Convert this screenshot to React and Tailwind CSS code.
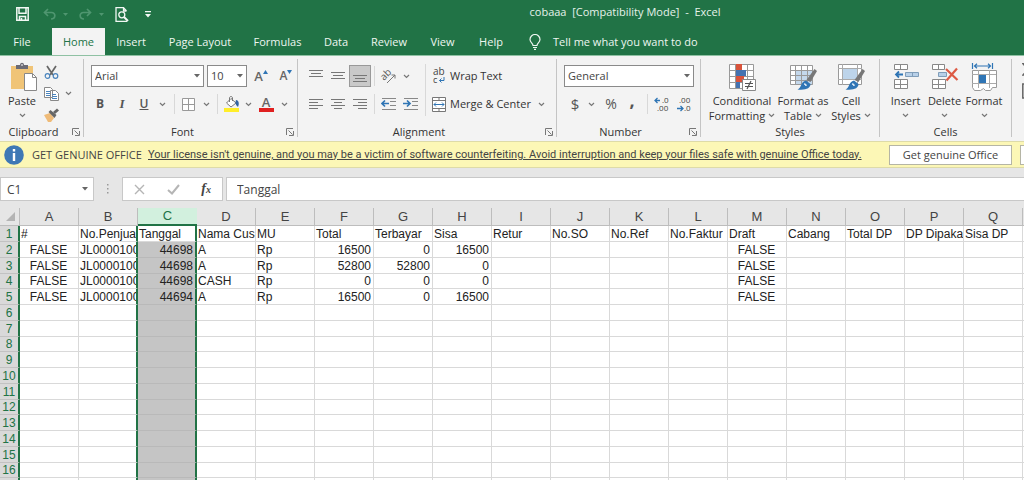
import { useState } from 'react';

const tabs = [
    { name: 'Insert', width: 'w-[52px]' },
    { name: 'Page Layout', width: 'w-[86px]' },
    { name: 'Formulas', width: 'w-[69px]' },
    { name: 'Data', width: 'w-12' },
    { name: 'Review', width: 'w-[58px]' },
    { name: 'View', width: 'w-[49px]' },
    { name: 'Help', width: 'w-12' },
];

const letters = 'ABCDEFGHIJKLMNOPQ'.split('');

const headings = ['#', 'No.Penjua', 'Tanggal', 'Nama Cus', 'MU', 'Total', 'Terbayar', 'Sisa', 'Retur', 'No.SO', 'No.Ref', 'No.Faktur', 'Draft', 'Cabang', 'Total DP', 'DP Dipaka', 'Sisa DP'];

const records = [
    { A: 'FALSE', B: 'JL0000100', C: 44698, D: 'A', E: 'Rp', F: 16500, G: 0, H: 16500, M: 'FALSE' },
    { A: 'FALSE', B: 'JL0000100', C: 44698, D: 'A', E: 'Rp', F: 52800, G: 52800, H: 0, M: 'FALSE' },
    { A: 'FALSE', B: 'JL0000100', C: 44698, D: 'CASH', E: 'Rp', F: 0, G: 0, H: 0, M: 'FALSE' },
    { A: 'FALSE', B: 'JL0000100', C: 44694, D: 'A', E: 'Rp', F: 16500, G: 0, H: 16500, M: 'FALSE' },
];

const Chevron = () => (
    <svg width="7" height="5" viewBox="0 0 7 5" fill="none" stroke="#777" strokeWidth="1.2" className="shrink-0"><path d="M1 1l2.5 2.5L6 1" /></svg>
);

const Caret = () => (
    <svg width="6" height="4" viewBox="0 0 6 4" fill="#666" className="shrink-0"><path d="M0 0h6L3 3.6z" /></svg>
);

const Launcher = ({ label }) => (
    <button aria-label={label}>
        <svg width="8" height="8" viewBox="0 0 8 8" fill="none" stroke="#777"><path d="M.5 7V.5H7M2.5 2.5l4 4M7.500 3v4.500H3" /></svg>
    </button>
);

const Divider = ({ className = 'h-5' }) => <div className={`w-px shrink-0 bg-[#d8d8d8] ${className}`} />;

const IconButton = ({ label, width = 'w-[22px]', className = '', children }) => (
    <button aria-label={label} className={`${width} h-[22px] shrink-0 flex items-center justify-center ${className}`}>{children}</button>
);

const Group = ({ title, width, launcher, children }) => (
    <section className={`${width} shrink-0 flex flex-col h-[78px] border-r border-[#c4c4c4]`}>
        <div className="h-[65px] shrink-0">{children}</div>
        <div className="flex items-center h-4 px-[3px]">
            <span className={launcher ? 'flex-1 text-center pr-2' : 'flex-1 text-center'}>{title}</span>
            {launcher && <Launcher label={`${title} settings`} />}
        </div>
    </section>
);

const BigButton = ({ icon, lines, width }) => (
    <button className={`${width} shrink-0 flex flex-col items-center pt-[2px] leading-[15px]`}>
        <span className="h-[30px] flex items-start">{icon}</span>
        <span>{lines[0]}</span>
        <span className="flex items-center gap-[3px] h-[15px]">{lines[1]}<Chevron /></span>
    </button>
);

const Select = ({ label, value, width }) => (
    <div className={`${width} grid items-center`}>
        <select aria-label={label} defaultValue={value} className="col-start-1 row-start-1 w-full h-[22px] appearance-none border border-[#8a8a8a] bg-white pl-[3px] text-[#444]">
            <option>{value}</option>
        </select>
        <span className="col-start-1 row-start-1 justify-self-end pr-1 pointer-events-none"><Caret /></span>
    </div>
);

const Lines = ({ d }) => (
    <svg width="14" height="14" viewBox="0 0 14 14" stroke="#777"><path d={d} /></svg>
);

const Indent = ({ flip }) => (
    <svg width="16" height="14" viewBox="0 0 16 14" fill="none">
        <path d="M1 1.500h14M9 4.500h6M9 8.500h6M1 12.500h14" stroke="#888" />
        <path d={flip ? 'M0 6.500h7M4 3.500l3 3-3 3' : 'M8 6.500H1M4 3.500l-3 3 3 3'} stroke="#2f75b5" strokeWidth="1.700" />
    </svg>
);

const Brush = () => (
    <>
        <path d="M25.500 6l2.500 2-6.500 11-4-2z" fill="#777" />
        <path d="M17 17.500l4.500 3.500c0 4-4.500 6.500-13 5.500 4-1 3-8 8.500-9z" fill="#2f75b5" />
        <path d="M15 21c1 0 2 1 2 2" stroke="#dce9f5" strokeWidth="1.500" />
    </>
);

const PasteIcon = () => (
    <svg width="27" height="29" viewBox="0 0 27 29" fill="none">
        <path d="M0 4h22v23H0z" fill="#f0c477" />
        <path d="M5 7V3h4c0-3 4-3 4 0h4v4z" fill="#6b6b75" />
        <path d="M10 3h2" stroke="#fff" />
        <path d="M13.500 11.500h8l4 4v13h-12z" fill="#fff" stroke="#888" />
        <path d="M21.500 11.500v4h4" stroke="#888" />
    </svg>
);

const ConditionalIcon = () => (
    <svg width="28" height="29" viewBox="0 0 28 29" fill="none">
        <path d="M1.500 1.500h24v24h-24z" fill="#fff" />
        <path d="M1.500 1.500h24v24h-24zM1 7.500h25M1 13.500h25M1 19.500h25M7.500 1v24M19.500 1v24" stroke="#999" />
        <path d="M8 1h6v6H8z" fill="#d9533b" />
        <path d="M8 7h10v6H8z" fill="#4472b0" />
        <path d="M8 13h8v6H8z" fill="#d9533b" />
        <path d="M8 19h4v6H8z" fill="#4472b0" />
        <path d="M14.500 16.500h13v11h-13z" fill="#fff" stroke="#888" />
        <path d="M17 20.500h8M17 23.500h8M23 18l-4 8" stroke="#555" strokeWidth="1.200" />
    </svg>
);

const TableIcon = () => (
    <svg width="28" height="28" viewBox="0 0 28 28" fill="none">
        <path d="M1.500 2.500h22v19h-22z" fill="#fff" />
        <path d="M7 7h17v15H7z" fill="#c4d8ec" />
        <path d="M1.500 2.500h22v19h-22zM1 7.500h23M1 12.500h23M1 17.500h23M6.500 2v20M12.500 2v20M18.500 2v20" stroke="#999" />
        <Brush />
    </svg>
);

const CellStylesIcon = () => (
    <svg width="28" height="28" viewBox="0 0 28 28" fill="none">
        <path d="M1.500 1.500h23v20h-23z" fill="#fff" stroke="#999" />
        <path d="M6 6h14v10H6z" fill="#bdd4ea" />
        <path d="M1 5.500h24M1 16.500h24M5.500 1v21M20.500 1v21" stroke="#aaa" />
        <Brush />
    </svg>
);

const InsertIcon = () => (
    <svg width="26" height="28" viewBox="0 0 26 28" fill="none">
        <path d="M1.500 1.500h13v5h-13zM7.500 1v6M1.500 16.500h13v9h-13zM7.500 16v10M1 21.500h14" fill="#fff" stroke="#888" />
        <path d="M12.500 9.500h13v4h-13z" fill="#b8d0e8" stroke="#7f9db9" />
        <path d="M19.500 9v5" stroke="#7f9db9" />
        <path d="M10 11.500H3M6 8.500l-3 3 3 3" stroke="#2f75b5" strokeWidth="1.800" />
    </svg>
);

const DeleteIcon = () => (
    <svg width="28" height="28" viewBox="0 0 28 28" fill="none">
        <path d="M1.500 1.500h12v5h-12zM7.500 1v6M1.500 16.500h13v9h-13zM7.500 16v10M1 21.500h14" fill="#fff" stroke="#888" />
        <path d="M7.500 9.500h8v4h-8z" fill="#b8d0e8" stroke="#7f9db9" />
        <path d="M15 6l11.500 11M26 5.500L15.500 17.500" stroke="#dd5a44" strokeWidth="2.200" />
    </svg>
);

const FormatIcon = () => (
    <svg width="26" height="29" viewBox="0 0 26 29" fill="none">
        <path d="M1.500 0v6M21.500 0v6M3 3h17M6 .8L3.500 3 6 5.200M17 .8L19.500 3 17 5.200" stroke="#2f75b5" strokeWidth="1.200" />
        <path d="M1.500 7.500h24v17h-4l-2 3h-5l-2-2-3 2h-6l-2-3z" fill="#fff" stroke="#999" />
        <path d="M1 11.500h24M1 20.500h24M7.500 7v18M18.500 7v18" stroke="#aaa" />
        <path d="M8 12h7v8H8z" fill="#2f75b5" />
    </svg>
);

const Ribbon = () => (
    <div className="flex h-[86px] overflow-hidden bg-[#f3f3f3] border-t border-[#8fc1a3] pt-[3px] text-[#333]">
        <Group title="Clipboard" width="w-[84px]" launcher>
            <div className="flex pt-[3px]">
                <button className="w-11 flex flex-col items-center leading-[15px]">
                    <span className="pl-1 h-[31px]"><PasteIcon /></span>
                    <span>Paste</span>
                    <span className="h-[15px] flex items-center"><Chevron /></span>
                </button>
                <div className="flex flex-col">
                    <button aria-label="Cut" className="h-[21px] w-[15px]">
                        <svg width="15" height="15" viewBox="0 0 15 15" fill="none">
                            <path d="M3 1l6 9M12 1L6 10" stroke="#666" strokeWidth="1.700" />
                            <circle cx="3.500" cy="11" r="2.300" stroke="#4a84bd" strokeWidth="1.200" />
                            <circle cx="11.500" cy="11" r="2.300" stroke="#4a84bd" strokeWidth="1.200" />
                        </svg>
                    </button>
                    <button aria-label="Copy" className="h-[21px] flex items-center gap-[6px]">
                        <svg width="15" height="14" viewBox="0 0 15 14">
                            <path d="M.5.500h6l2 2v8h-8zM6.500 3.500h5l3 3v7h-8z" fill="#fff" stroke="#888" />
                            <path d="M2 4.500h4M2 6.500h4M2 8.500h4M8 7.500h4M8 9.500h5M8 11.500h5" stroke="#4a84bd" />
                        </svg>
                        <Chevron />
                    </button>
                    <button aria-label="Format Painter" className="h-[21px] w-[15px] flex items-center">
                        <svg width="15" height="14" viewBox="0 0 15 14">
                            <path d="M0 7l6-2 4 5-3 4H4z" fill="#efbb78" />
                            <path d="M4.500 4l2-2 6 5-2 3z" fill="#666" />
                            <path d="M9 4l4-3.500 2 2-4 3.500z" fill="#666" />
                        </svg>
                    </button>
                </div>
            </div>
        </Group>

        <Group title="Font" width="w-[214px]" launcher>
            <div className="flex items-center gap-[3px] pl-[7px] pt-[6px]">
                <Select label="Font" value="Arial" width="w-[113px]" />
                <Select label="Font Size" value="10" width="w-10" />
                <IconButton label="Increase Font Size" className="text-[13px] font-semibold text-[#666]">
                    A<svg width="5" height="4" viewBox="0 0 5 4" fill="#2f75b5" className="mb-2"><path d="M0 4h5L2.500 0z" /></svg>
                </IconButton>
                <IconButton label="Decrease Font Size" className="text-[12px] font-semibold text-[#666]">
                    A<svg width="5" height="4" viewBox="0 0 5 4" fill="#2f75b5" className="mb-2"><path d="M0 0h5L2.500 4z" /></svg>
                </IconButton>
            </div>
            <div className="flex items-center pl-[5px] pt-[6px] text-[#555]">
                <IconButton label="Bold" className="font-bold text-[12px]">B</IconButton>
                <IconButton label="Italic" className="font-['Liberation_Serif'] italic font-bold text-[13px]">I</IconButton>
                <IconButton label="Underline" className="font-semibold underline text-[12px]">U</IconButton>
                <IconButton label="Underline options" width="w-[14px]"><Chevron /></IconButton>
                <div className="w-[5px]" />
                <Divider />
                <IconButton label="Borders" width="w-[26px]">
                    <svg width="13" height="13" viewBox="0 0 13 13" fill="#fff" stroke="#999"><path d="M.5.500h12v12H.5zM6.500 0v13M0 6.500h13" /></svg>
                </IconButton>
                <IconButton label="Border options" width="w-[10px]"><Chevron /></IconButton>
                <div className="w-[6px]" />
                <Divider />
                <IconButton label="Fill Color" width="w-[27px]">
                    <svg width="16" height="16" viewBox="0 0 16 16" fill="none">
                        <path d="M7 2.500L12 7 7 11 2.500 7z" fill="#fff" stroke="#777" />
                        <path d="M5.500 6V2c0-2 3-2 3 0v3" stroke="#777" />
                        <path d="M12 4c3 0 3.500 4 2 7-1-1-3.500-3-2-7z" fill="#3465a4" />
                        <path d="M0 12h15v4H0z" fill="#ffee2a" />
                    </svg>
                </IconButton>
                <IconButton label="Fill Color options" width="w-[6px]"><Chevron /></IconButton>
                <IconButton label="Font Color" width="w-[30px]">
                    <span className="w-[15px] h-[15px] border-b-4 border-[#e02020] text-[13px] leading-[11px] font-semibold text-[#666]">A</span>
                </IconButton>
                <IconButton label="Font Color options" width="w-[6px]"><Chevron /></IconButton>
            </div>
        </Group>

        <Group title="Alignment" width="w-[259px]" launcher>
            <div className="flex">
                <div className="pl-[7px]">
                    <div className="flex items-center pt-[6px]">
                        <IconButton label="Top Align"><Lines d="M0 1.500h14M2 4.500h10M0 7.500h14" /></IconButton>
                        <IconButton label="Middle Align"><Lines d="M0 3.500h14M2 6.500h10M0 9.500h14" /></IconButton>
                        <IconButton label="Bottom Align" className="bg-[#c9c9c9] border border-[#999]"><Lines d="M0 6.500h14M2 9.500h10M0 12.500h14" /></IconButton>
                        <div className="w-[3px]" />
                        <Divider />
                        <IconButton label="Orientation" width="w-7">
                            <svg width="16" height="16" viewBox="0 0 16 16" fill="none" className="overflow-visible">
                                <text x="0" y="10" transform="rotate(-45 5 8)" fontSize="10" fill="#555">ab</text>
                                <path d="M6 15l8-8M10.500 7H14v3.500" stroke="#777" />
                            </svg>
                        </IconButton>
                        <Chevron />
                    </div>
                    <div className="flex items-center pt-[6px]">
                        <IconButton label="Align Left"><Lines d="M0 2.500h14M0 5.500h9M0 8.500h14M0 11.500h9" /></IconButton>
                        <IconButton label="Center"><Lines d="M0 2.500h14M3 5.500h8M0 8.500h14M3 11.500h8" /></IconButton>
                        <IconButton label="Align Right"><Lines d="M0 2.500h14M5 5.500h9M0 8.500h14M5 11.500h9" /></IconButton>
                        <div className="w-[3px]" />
                        <Divider />
                        <IconButton label="Decrease Indent" width="w-7"><Indent /></IconButton>
                        <IconButton label="Increase Indent" width="w-4"><Indent flip /></IconButton>
                    </div>
                </div>
                <div className="w-[6px]" />
                <Divider className="h-[52px] mt-[5px]" />
                <div className="pl-[6px] pt-[6px] flex flex-col gap-[6px]">
                    <button className="flex items-center gap-1 h-[22px]">
                        <svg width="14" height="18" viewBox="0 0 14 18" fill="none" className="overflow-visible">
                            <text x="1" y="8" fontSize="10" fill="#444">ab</text>
                            <text x="1" y="16" fontSize="9" fill="#444">c</text>
                            <path d="M12 10v3.500H7.500M9.500 11.500l-2 2 2 2" stroke="#2f75b5" />
                        </svg>
                        Wrap Text
                    </button>
                    <button className="flex items-center gap-1 h-[22px]">
                        <svg width="14" height="15" viewBox="0 0 14 15" fill="none">
                            <path d="M.5.500h13v14H.5zM0 3.500h14M0 11.500h14M7 0v3.500M7 11.500V15" fill="#fff" stroke="#777" />
                            <path d="M2 7.500h10M4 5.500l-2 2 2 2M10 5.500l2 2-2 2" stroke="#2f75b5" />
                        </svg>
                        <span className="w-[84px] text-left">Merge &amp; Center</span>
                        <Chevron />
                    </button>
                </div>
            </div>
        </Group>

        <Group title="Number" width="w-36" launcher>
            <div className="pl-[7px] pt-[6px]">
                <Select label="Number Format" value="General" width="w-[130px]" />
            </div>
            <div className="flex items-center pl-[7px] pt-[6px] text-[#555]">
                <IconButton label="Accounting Format" className="text-[15px]">$</IconButton>
                <IconButton label="Accounting options" width="w-[10px]"><Chevron /></IconButton>
                <IconButton label="Percent Style" width="w-[30px]" className="text-[14px]">%</IconButton>
                <IconButton label="Comma Style" width="w-3" className="text-[18px] font-bold pb-2">,</IconButton>
                <div className="w-[9px]" />
                <Divider />
                <IconButton label="Increase Decimal" width="w-[27px]">
                    <svg width="16" height="16" viewBox="0 0 16 16" fill="none" className="overflow-visible">
                        <path d="M6 4.500H1M3.500 2L1 4.500 3.500 7" stroke="#2f75b5" strokeWidth="1.300" />
                        <text x="8" y="7" fontSize="8" fill="#444">.0</text>
                        <text x="3" y="15" fontSize="8" fill="#444">.00</text>
                    </svg>
                </IconButton>
                <IconButton label="Decrease Decimal" width="w-[18px]">
                    <svg width="16" height="16" viewBox="0 0 16 16" fill="none" className="overflow-visible">
                        <path d="M1 12.500h6M4.500 10L7 12.500 4.500 15" stroke="#2f75b5" strokeWidth="1.300" />
                        <text x="3" y="7" fontSize="8" fill="#444">.00</text>
                        <text x="8" y="15" fontSize="8" fill="#444">.0</text>
                    </svg>
                </IconButton>
            </div>
        </Group>

        <Group title="Styles" width="w-[179px]">
            <div className="flex pl-[7px] pt-[2px]">
                <BigButton icon={<ConditionalIcon />} lines={['Conditional', 'Formatting']} width="w-[68px]" />
                <BigButton icon={<TableIcon />} lines={['Format as', 'Table']} width="w-[54px]" />
                <BigButton icon={<CellStylesIcon />} lines={['Cell', 'Styles']} width="w-[42px]" />
            </div>
        </Group>

        <Group title="Cells" width="w-[132px]">
            <div className="flex pl-[6px] pt-[2px]">
                <BigButton icon={<InsertIcon />} lines={['Insert', '']} width="w-[39px]" />
                <BigButton icon={<DeleteIcon />} lines={['Delete', '']} width="w-[39px]" />
                <BigButton icon={<FormatIcon />} lines={['Format', '']} width="w-10" />
            </div>
        </Group>

        <div className="flex-1 overflow-hidden pl-[10px] pt-1">
            <svg width="12" height="40" viewBox="0 0 12 40" fill="none" stroke="#666" strokeWidth="1.500">
                <path d="M11 .8H1l5 5.700L1 12h10" />
                <path d="M.8 21h10v14H.8z" />
            </svg>
        </div>
    </div>
);

const TitleBar = () => (
    <header className="flex items-center h-7 text-[#e6f2ea]">
        <div className="w-[226px] shrink-0 flex items-center pl-4">
            <button aria-label="Save">
                <svg width="13" height="14" viewBox="0 0 13 14" fill="none" stroke="#f2f8f4" strokeWidth="1.500"><path d="M.8.800h11.400v12.400H.8zM3 1v5.200h7V1M3.500 13V9.500h6V13M5.500 11v2" /></svg>
            </button>
            <button aria-label="Undo" className="flex items-center gap-[7px] ml-[14px]">
                <svg width="13" height="12" viewBox="0 0 13 12" fill="none" stroke="#4f9670" strokeWidth="1.700"><path d="M5 1L1.500 4.500 5 8M2 4.500h6.500c4.500 0 4.500 6.500-.5 6.500" /></svg>
                <svg width="5" height="3" viewBox="0 0 5 3" fill="#4f9670"><path d="M0 0h5L2.500 3z" /></svg>
            </button>
            <button aria-label="Redo" className="flex items-center gap-[7px] ml-[11px]">
                <svg width="13" height="12" viewBox="0 0 13 12" fill="none" stroke="#4f9670" strokeWidth="1.700"><path d="M8 1l3.500 3.500L8 8M11 4.500H4.500C0 4.500 0 11 5 11" /></svg>
                <svg width="5" height="3" viewBox="0 0 5 3" fill="#4f9670"><path d="M0 0h5L2.500 3z" /></svg>
            </button>
            <button aria-label="Print Preview" className="ml-[11px]">
                <svg width="14" height="15" viewBox="0 0 14 15" fill="none" stroke="#f2f8f4" strokeWidth="1.300"><path d="M11.500 4L8.500.700H1v13.600h11M8.500 1v3h3" /><circle cx="6.800" cy="7.800" r="3" /><path d="M9 10l4 4" strokeWidth="2" /></svg>
            </button>
            <button aria-label="Customize Quick Access Toolbar" className="ml-4">
                <svg width="6" height="7" viewBox="0 0 6 7" fill="#f2f8f4"><path d="M0 0h6v1.300H0zM0 3h6L3 6.500z" /></svg>
            </button>
        </div>
        <h1 className="flex-1 text-center whitespace-pre pb-1">cobaaa  [Compatibility Mode]  -  Excel</h1>
    </header>
);

const Tabs = () => (
    <nav className="flex h-[27px] text-[#eef6f1] whitespace-nowrap">
        <button className="w-[52px] pr-2">File</button>
        <button className="w-[53px] bg-[#f3f3f3] text-[#217346]">Home</button>
        {tabs.map((tab) => <button key={tab.name} className={tab.width}>{tab.name}</button>)}
        <button className="flex items-center gap-3 pl-[14px]">
            <svg width="12" height="16" viewBox="0 0 12 16" fill="none" stroke="#eef6f1" strokeWidth="1.200"><path d="M4 11.500C4 9 1 8.500 1 5.500a5 5 0 0110 0C11 8.500 8 9 8 11.500zM4 13.500h4M5 15.400h2" /></svg>
            Tell me what you want to do
        </button>
    </nav>
);

const cellStyle = (letter, row) => {
    let align = 'text-left';
    if (row > 1 && 'CFGH'.includes(letter)) align = 'text-right';
    if (row > 1 && 'AM'.includes(letter)) align = 'text-center';
    const edge = 'BC'.includes(letter) ? 'border-r-2 border-r-[#217346]' : 'border-r border-r-[#d9d9d9]';
    const fill = letter === 'C' && row > 1 ? 'bg-[#c5c5c5] border-b-[#b9b9b9]' : 'bg-white border-b-[#d9d9d9]';
    return `${align} ${edge} ${fill} border-b pl-px pr-[2px] overflow-hidden whitespace-nowrap`;
};

const Sheet = () => (
    <table className="w-full table-fixed border-separate border-spacing-0 font-['Liberation_Sans',Arial,sans-serif] text-[12px] leading-[14px] text-[#222]">
        <colgroup>
            <col className="w-5" />
            {letters.map((letter) => <col key={letter} className="w-[59px]" />)}
            <col />
        </colgroup>
        <thead>
            <tr className="h-[18px] text-[#444]">
                <th aria-label="Select all" className="border-r border-b border-[#bdbdbd]">
                    <svg width="9" height="9" viewBox="0 0 9 9" fill="#b4b4b4" className="ml-auto mr-1"><path d="M9 0v9H0z" /></svg>
                </th>
                {letters.map((letter) => (
                    <th key={letter} className={letter === 'C' ? 'font-normal text-[13px] bg-[#d2f0de] text-[#217346] border-b-2 border-[#217346]' : 'font-normal text-[13px] border-r border-b border-[#bdbdbd]'}>{letter}</th>
                ))}
                <th className="border-b border-[#bdbdbd]" />
            </tr>
        </thead>
        <tbody>
            {Array.from({ length: 17 }, (_, i) => i + 1).map((row) => (
                <tr key={row} className="h-4 [&:nth-child(4n)]:h-[15px]">
                    <th className="font-normal bg-[#d9d9d9] text-[#217346] border-b border-b-[#c2c2c2] border-r-2 border-r-[#217346]">{row < 17 && row}</th>
                    {letters.map((letter, i) => (
                        <td key={letter} className={cellStyle(letter, row)}>{row === 1 ? headings[i] : records[row - 2]?.[letter]}</td>
                    ))}
                    <td className="border-b border-b-[#d9d9d9] bg-white" />
                </tr>
            ))}
        </tbody>
    </table>
);

const App = () => {
    const [formula, setFormula] = useState('Tanggal');

    return (
        <div className="h-screen overflow-hidden bg-[#e6e6e6] font-['Open_Sans','Noto_Sans',sans-serif] text-[11px] leading-4">
            <div className="bg-[#217346]">
                <TitleBar />
                <Tabs />
            </div>
            <Ribbon />
            <div className="flex items-center h-[27px] overflow-hidden bg-[#fcf7b6] border-y border-[#dedba8] pl-1 text-[#444] whitespace-nowrap">
                <svg width="20" height="20" viewBox="0 0 20 20" className="shrink-0"><circle cx="10" cy="10" r="9.800" fill="#3f78b5" /><path d="M8.800 4h2.400v2.400H8.800zM8.800 8h2.400v8H8.800z" fill="#fff" /></svg>
                <span className="w-[116px] shrink-0 pl-2">GET GENUINE OFFICE</span>
                <a href="#genuine" className="w-[741px] shrink-0 pl-2 underline font-['Roboto','Open_Sans',sans-serif]">Your license isn't genuine, and you may be a victim of software counterfeiting. Avoid interruption and keep your files safe with genuine Office today.</a>
                <button className="ml-2 w-[123px] h-5 shrink-0 border border-[#b5b5a5] bg-white">Get genuine Office</button>
                <button aria-label="Learn more" className="ml-2 w-24 h-5 shrink-0 border border-[#b5b5a5] bg-white" />
            </div>
            <div className="flex items-center gap-[3px] pt-[9px] pb-[7px] text-[12px] text-[#444]">
                <div className="w-[94px] grid items-center">
                    <input aria-label="Name Box" defaultValue="C1" className="col-start-1 row-start-1 w-full h-6 border border-[#c8c8c8] bg-white pl-[6px]" />
                    <button aria-label="Named ranges" className="col-start-1 row-start-1 justify-self-end pr-[6px]"><Caret /></button>
                </div>
                <svg width="22" height="12" viewBox="0 0 22 12" fill="#999"><path d="M10 1h1.500v1.500H10zM10 5h1.500v1.500H10zM10 9h1.500v1.500H10z" /></svg>
                <div className="w-[101px] h-6 flex items-center justify-between border border-[#c8c8c8] bg-white px-[11px]">
                    <button aria-label="Cancel"><svg width="11" height="11" viewBox="0 0 11 11" stroke="#b5b5b5" strokeWidth="1.400"><path d="M1 1l9 9M10 1l-9 9" /></svg></button>
                    <button aria-label="Enter"><svg width="13" height="11" viewBox="0 0 13 11" fill="none" stroke="#b5b5b5" strokeWidth="2"><path d="M1 6l4 3.500L12 1" /></svg></button>
                    <button aria-label="Insert Function" className="font-['Liberation_Serif'] italic font-bold text-[14px]">f<span className="text-[10px]">x</span></button>
                </div>
                <input aria-label="Formula Bar" value={formula} onChange={(e) => setFormula(e.target.value)} className="flex-1 min-w-0 h-6 border border-r-0 border-[#c8c8c8] bg-white pl-[10px]" />
            </div>
            <Sheet />
        </div>
    );
}

export default App;
